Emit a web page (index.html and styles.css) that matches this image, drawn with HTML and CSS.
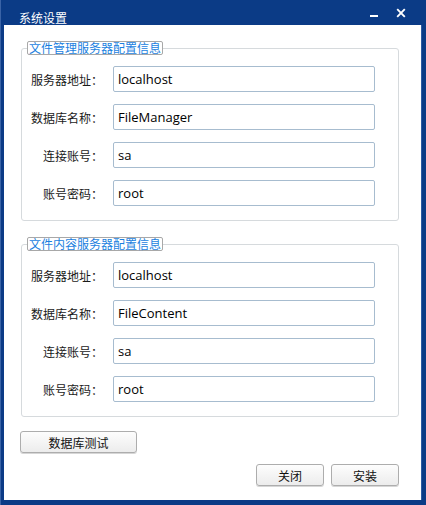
FILE: index.html
```html
<!DOCTYPE html>
<html lang="zh-CN">
<head>
<meta charset="utf-8">
<title>系统设置</title>
<link rel="stylesheet" href="styles.css">
</head>
<body>
<div class="window">
  <div class="titlebar">
    <span class="title">系统设置</span>
    <span class="tb-btn tb-min"><svg width="10" height="10" viewBox="0 0 10 10"><rect x="1" y="4" width="8" height="2" fill="#fff"/></svg></span>
    <span class="tb-btn tb-close"><svg width="10" height="10" viewBox="0 0 10 10"><path d="M1.2 1.2 L8.8 8.8 M8.8 1.2 L1.2 8.8" stroke="#fff" stroke-width="1.9" fill="none"/></svg></span>
  </div>
  <div class="client">
    <fieldset class="group">
      <legend class="group-title">文件管理服务器配置信息</legend>
      <div class="row"><label class="lbl">服务器地址<span class="colon">：</span></label><input class="field" value="localhost"></div>
      <div class="row"><label class="lbl">数据库名称<span class="colon">：</span></label><input class="field" value="FileManager"></div>
      <div class="row"><label class="lbl">连接账号<span class="colon">：</span></label><input class="field" value="sa"></div>
      <div class="row"><label class="lbl">账号密码<span class="colon">：</span></label><input class="field" value="root"></div>
    </fieldset>
    <fieldset class="group group-second">
      <legend class="group-title">文件内容服务器配置信息</legend>
      <div class="row"><label class="lbl">服务器地址<span class="colon">：</span></label><input class="field" value="localhost"></div>
      <div class="row"><label class="lbl">数据库名称<span class="colon">：</span></label><input class="field" value="FileContent"></div>
      <div class="row"><label class="lbl">连接账号<span class="colon">：</span></label><input class="field" value="sa"></div>
      <div class="row"><label class="lbl">账号密码<span class="colon">：</span></label><input class="field" value="root"></div>
    </fieldset>
    <div class="test-row"><button class="btn btn-test">数据库测试</button></div>
    <div class="actions">
      <button class="btn btn-small">关闭</button>
      <button class="btn btn-small">安装</button>
    </div>
  </div>
</div>
</body>
</html>
```
FILE: styles.css
```css
html, body {
  margin: 0;
  padding: 0;
}
body {
  width: 426px;
  height: 505px;
  overflow: hidden;
  font-family: "Noto Sans CJK SC", "Noto Sans", sans-serif;
}
.window {
  width: 426px;
  height: 505px;
  box-sizing: border-box;
  background: #0b3b86;
  padding: 0 5px 5px 4px;
  display: flex;
  flex-direction: column;
  box-shadow: inset 1px 0 0 #3a63a6;
}
.titlebar {
  height: 25px;
  flex: none;
  display: flex;
  align-items: center;
  color: #fff;
}
.title {
  font-size: 12px;
  line-height: 14px;
  margin-left: 15px;
  margin-top: 10px;
  flex: 1;
}
.tb-btn {
  display: flex;
  width: 10px;
  height: 10px;
}
.tb-min {
  margin-right: 17px;
  margin-top: 7px;
}
.tb-close {
  margin-right: 15px;
  margin-top: 1px;
}
.client {
  flex: 1;
  background: #fff;
  display: flex;
  flex-direction: column;
  box-shadow: 1px 0 0 #2d5aa2;
}
.group {
  margin: 16px 22px 0 17px;
  padding: 11px 0 14px 0;
  border: 1px solid #d6dadd;
  border-radius: 3px;
  display: flex;
  flex-direction: column;
  gap: 12px;
  min-width: 0;
}
.group-second {
  margin-top: 16px;
}
.group-title {
  margin-left: 5px;
  padding: 0 1px;
  border: 1px solid #a8a8a8;
  border-radius: 2px;
  font-size: 12px;
  line-height: 12px;
  color: #1b7fe0;
  background: #fff;
}
.row {
  display: flex;
  align-items: center;
  height: 26px;
}
.lbl {
  width: 78px;
  text-align: right;
  font-size: 12px;
  color: #1a1a1a;
  margin-right: 13px;
  white-space: nowrap;
}
.colon {
  display: inline-block;
  width: 9px;
  text-align: left;
  overflow: visible;
  white-space: nowrap;
}
.field {
  width: 262px;
  height: 26px;
  box-sizing: border-box;
  border: 1px solid #a7bccf;
  border-radius: 2px;
  padding: 0 4px;
  font-family: "Open Sans", "Noto Sans", sans-serif;
  font-size: 13px;
  color: #000;
  background: #fff;
  outline: none;
}
.btn {
  height: 22px;
  box-sizing: border-box;
  border: 1px solid #adadad;
  border-radius: 3px;
  background: linear-gradient(#fdfdfd, #ececec);
  box-shadow: 0 1px 0 #d6d6d6;
  font-family: "Noto Sans CJK SC", sans-serif;
  font-size: 12px;
  color: #111;
  padding: 0;
}
.test-row {
  display: flex;
  margin: 14px 0 0 16px;
}
.btn-test {
  width: 117px;
}
.actions {
  display: flex;
  justify-content: flex-end;
  gap: 7px;
  margin: 11px 22px 0 0;
}
.btn-small {
  width: 68px;
}
```
